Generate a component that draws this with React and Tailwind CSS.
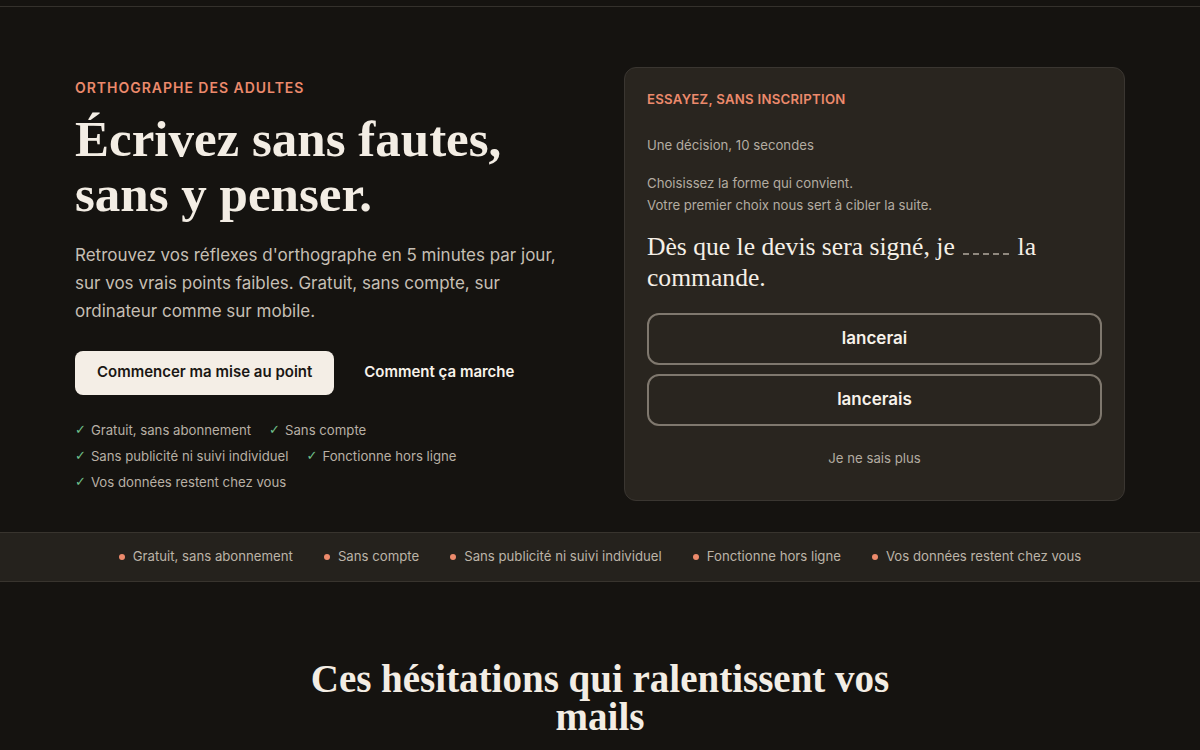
const checks = [
  "Gratuit, sans abonnement",
  "Sans compte",
  "Sans publicité ni suivi individuel",
  "Fonctionne hors ligne",
  "Vos données restent chez vous",
];

const serif = "font-['Liberation_Serif','DejaVu_Serif',serif]";

function App() {
  return (
    <main className="min-h-screen bg-[#151310] font-['Inter','Liberation_Sans',sans-serif] text-[#f3ede4]">
      <div className="h-[6px]" />
      <div className="border-t border-[#34312c]" />

      <section className="mx-auto grid w-full max-w-[1050px] grid-cols-2 items-center gap-12 pt-[60px] pb-[31px]">
        <div>
          <p className="text-[14px] font-semibold uppercase tracking-[0.07em] text-[#ec8a6c]">
            Orthographe des adultes
          </p>
          <h1 className={`${serif} mt-[14px] text-[51px] leading-[55px] font-bold text-[#f3ede4]`}>
            Écrivez sans fautes,
            <br />
            sans y penser.
          </h1>
          <p className="mt-[19px] max-w-[490px] text-[17px] leading-[28px] text-[#c6bfb4]">
            Retrouvez vos réflexes d'orthographe en 5 minutes par jour, sur vos vrais points
            faibles. Gratuit, sans compte, sur ordinateur comme sur mobile.
          </p>
          <div className="mt-[26px] flex items-center gap-[30px]">
            <button className="h-[44px] rounded-lg bg-[#f4eee6] px-[22px] text-[15px] font-semibold text-[#1a1714]">
              Commencer ma mise au point
            </button>
            <button className="text-[15px] font-semibold text-[#f7f2ea]">Comment ça marche</button>
          </div>
          <ul className="mt-[25px] flex flex-wrap gap-x-[18px] gap-y-[6px] text-[13.2px] leading-[20px] text-[#b8b0a5]">
            {checks.map((c) => (
              <li key={c} className="flex items-center gap-[5px]">
                <span className="font-['DejaVu_Sans',sans-serif] text-[13px] text-[#6fc08c]">✓</span>
                {c}
              </li>
            ))}
          </ul>
        </div>

        <div className="rounded-xl border border-[#3a3631] bg-[#29251f] px-[22px] pt-[22px] pb-[32px]">
          <p className="text-[13.2px] font-semibold uppercase tracking-[0.02em] text-[#ec8a6c]">
            Essayez, sans inscription
          </p>
          <p className="mt-[26px] text-[13.2px] text-[#b3aca1]">Une décision, 10 secondes</p>
          <p className="mt-[16px] text-[13.2px] leading-[22px] text-[#b3aca1]">
            Choisissez la forme qui convient.
            <br />
            Votre premier choix nous sert à cibler la suite.
          </p>
          <p className={`${serif} mt-[15px] text-[25.6px] leading-[31px] text-[#f5efe6]`}>
            Dès que le devis sera signé, je{" "}
            <span className="mx-[2px] inline-block h-[12px] w-[46px] border-b-2 border-dashed border-[#8f887e]" />{" "}
            la commande.
          </p>
          <div className="mt-[20px] flex flex-col gap-[9px]">
            {["lancerai", "lancerais"].map((o) => (
              <button
                key={o}
                className="h-[52px] rounded-xl border-2 border-[#7f786e] text-[17px] font-semibold text-[#f7f2ea]"
              >
                {o}
              </button>
            ))}
          </div>
          <p className="mt-[23px] text-center text-[13.2px] text-[#b3aca1]">Je ne sais plus</p>
        </div>
      </section>

      <div className="border-y border-[#38342e] bg-[#25221d]">
        <ul className="flex h-[48px] items-center justify-center gap-[31px] text-[13.2px] text-[#bcb4a8]">
          {checks.map((c) => (
            <li key={c} className="flex items-center gap-[8px]">
              <span className="h-[6px] w-[6px] rounded-full bg-[#ec8a6c]" />
              {c}
            </li>
          ))}
        </ul>
      </div>

      <section className="px-6 pt-[78px] pb-16">
        <h2 className={`${serif} mx-auto max-w-[620px] text-center text-[39px] leading-[38px] font-bold text-[#f3ede4]`}>
          Ces hésitations qui ralentissent vos mails
        </h2>
      </section>
    </main>
  );
}

export default App;
